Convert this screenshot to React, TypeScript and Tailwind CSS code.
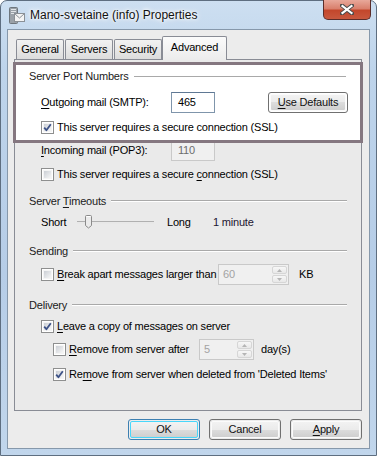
import React from "react";

const font = { fontFamily: '"Liberation Sans", Arial, sans-serif' };

function Check({ checked }: { checked?: boolean }) {
  return (
    <span className="relative inline-block w-[13px] h-[13px] shrink-0 border border-[#8e8f8f] bg-white">
      <span className="absolute inset-[1px] bg-[linear-gradient(135deg,#cbcfd5,#f6f6f6)] border border-[#f4f4f4]" />
      {checked && (
        <svg className="absolute inset-0" width="11" height="11" viewBox="0 0 11 11">
          <path d="M2.2 5.6 L4.4 8.2 L8.8 2.2" fill="none" stroke="#3d5287" strokeWidth="1.8" strokeLinejoin="round" />
        </svg>
      )}
    </span>
  );
}

function U({ children }: { children: React.ReactNode }) {
  return <span className="underline underline-offset-[2px]">{children}</span>;
}

function GroupHeader({ title, mt }: { title: React.ReactNode; mt: string }) {
  return (
    <div className={`flex items-center h-[16px] pl-[14px] pr-[14px] ${mt}`}>
      <span className="text-[#1b1b1b] whitespace-nowrap">{title}</span>
      <span className="flex-1 ml-[5px] h-px bg-[#a9a9a9] border-b border-white box-content" />
    </div>
  );
}

function Spinner() {
  return (
    <span className="flex flex-col w-[15px] h-[17px] ml-auto mr-[1px] gap-[1px]">
      <span className="flex-1 flex items-center justify-center border border-[#d6d6d6] rounded-[2px] bg-[linear-gradient(#f7f7f7,#e8e8e8)]">
        <svg width="5" height="3" viewBox="0 0 5 3"><path d="M0 3 L2.5 0 L5 3Z" fill="#b5b5b5" /></svg>
      </span>
      <span className="flex-1 flex items-center justify-center border border-[#d6d6d6] rounded-[2px] bg-[linear-gradient(#f7f7f7,#e8e8e8)]">
        <svg width="5" height="3" viewBox="0 0 5 3"><path d="M0 0 L2.5 3 L5 0Z" fill="#b5b5b5" /></svg>
      </span>
    </span>
  );
}

function Btn({ children, def, w }: { children: React.ReactNode; def?: boolean; w: string }) {
  return (
    <div
      className={`${w} h-[21px] rounded-[3px] border ${def ? "border-[#3c7fb1]" : "border-[#707070]"} p-px`}
    >
      <div
        className={`w-full h-full rounded-[2px] border ${def ? "border-[#48d7fb]" : "border-[#fbfbfb]"} flex items-center justify-center text-[#111] bg-[linear-gradient(#f2f2f2_0%,#ebebeb_50%,#dddddd_50%,#cfcfcf_100%)]`}
      >
        {children}
      </div>
    </div>
  );
}

export default function App() {
  return (
    <div
      style={font}
      className="w-[377px] h-[456px] text-[11px] tracking-[-0.2px] leading-none text-black overflow-hidden bg-white whitespace-nowrap"
    >
      <div className="relative w-[377px] h-[456px] rounded-t-[7px] border border-[#5e6e80] bg-[linear-gradient(to_bottom,#cddff1_0%,#bed4eb_15%,#b6cde7_60%,#c1d6ec_100%)] flex flex-col">
        {/* title bar */}
        <div className="h-[28px] flex items-center pl-[7px] shrink-0">
          <svg width="17" height="17" viewBox="0 0 17 17" className="mt-[1px]">
            <rect x="1.5" y="0.5" width="8" height="16" rx="1" fill="#9aa1a8" stroke="#6e767d" />
            <rect x="3" y="2" width="5" height="1" fill="#e1e4e7" />
            <rect x="3" y="4" width="5" height="1" fill="#e1e4e7" />
            <rect x="3" y="6" width="5" height="1" fill="#e1e4e7" />
            <rect x="6.5" y="6.5" width="10" height="8" fill="#f4f4f4" stroke="#8a9096" />
            <path d="M6.5 6.5 L11.5 11 L16.5 6.5" fill="none" stroke="#8a9096" />
          </svg>
          <span
            className="ml-[5px] text-[12px] tracking-normal text-[#111]"
            style={{ textShadow: "0 0 6px #fff, 0 0 4px #fff, 0 0 2px #fff" }}
          >
            Mano-svetaine (info) Properties
          </span>
          <div className="absolute top-[-1px] right-[5px] w-[48px] h-[20px] rounded-b-[5px] border border-[#5b2d2a] border-t-0 p-px bg-[linear-gradient(#e8a89a_0%,#d9806d_45%,#c3472c_55%,#c8583e_100%)] flex items-center justify-center">
            <svg width="14" height="11" viewBox="0 0 14 11">
              <path d="M2 1.5 L12 9.5 M12 1.5 L2 9.5" stroke="#4a4a4a" strokeWidth="4" strokeLinecap="square" />
              <path d="M2.5 2 L11.5 9 M11.5 2 L2.5 9" stroke="#ffffff" strokeWidth="2.2" strokeLinecap="square" />
            </svg>
          </div>
        </div>

        {/* client area */}
        <div className="ml-[6px] mr-[6px] h-[420px] border border-[#8698ab] bg-[#ececec] flex flex-col">
          <div className="pt-[7px] pl-[8px] h-[29px] flex items-end shrink-0">
            <div className="w-[48px] h-[20px] border border-b-0 border-[#898c95] rounded-t-[2px] bg-[linear-gradient(#f2f2f2,#dcdcdc)] flex items-center justify-center">
              General
            </div>
            <div className="ml-[1px] w-[48px] h-[20px] border border-b-0 border-[#898c95] rounded-t-[2px] bg-[linear-gradient(#f2f2f2,#dcdcdc)] flex items-center justify-center">
              Servers
            </div>
            <div className="ml-[1px] w-[48px] h-[20px] border border-b-0 border-[#898c95] rounded-t-[2px] bg-[linear-gradient(#f2f2f2,#dcdcdc)] flex items-center justify-center">
              Security
            </div>
            <div className="relative z-10 -mb-px w-[65px] h-[24px] border border-b-0 border-[#898c95] rounded-t-[2px] bg-[linear-gradient(#fbfbfb,#ececec)] flex items-center justify-center pb-[2px]">
              Advanced
            </div>
          </div>

          {/* tab panel */}
          <div className="ml-[6px] mr-[7px] h-[352px] border border-[#898c95] bg-[#eaeaea] flex flex-col shrink-0">
            {/* highlighted box */}
            <div className="relative z-10 mt-[2px] -mx-[2px] h-[81px] border-[3px] border-[#857780] bg-white flex flex-col shrink-0">
              <div className="flex items-center h-[16px] pl-[13px] pr-[14px] mt-[3px]">
                <span className="text-[#1b1b1b] whitespace-nowrap">Server Port Numbers</span>
                <span className="flex-1 ml-[5px] h-px bg-[#a9a9a9]" />
              </div>
              <div className="flex items-center h-[22px] mt-[7px] pl-[25px]">
                <span className="w-[130px]">
                  <U>O</U>utgoing mail (SMTP):
                </span>
                <span className="w-[44px] h-[21px] border border-[#7f95ab] border-t-[#5f7894] bg-white flex items-center pl-[6px]">
                  465
                </span>
                <span className="w-[53px]" />
                <Btn w="w-[80px]">
                  <span>
                    <U>U</U>se Defaults
                  </span>
                </Btn>
              </div>
              <div className="flex items-center h-[14px] mt-[7px] pl-[25px]">
                <Check checked />
                <span className="ml-[3px]">This server requires a secure connection (SSL)</span>
              </div>
            </div>

            <div className="flex items-center h-[21px] -mt-[3px] pl-[26px]">
              <span className="w-[130px]">
                <U>I</U>ncoming mail (POP3):
              </span>
              <span className="w-[44px] h-[21px] border border-[#c9c9c9] bg-[#f0f0f0] text-[#6d6d6d] flex items-center pl-[6px]">
                110
              </span>
            </div>
            <div className="flex items-center h-[14px] mt-[6px] pl-[26px]">
              <Check />
              <span className="ml-[3px]">
                This server requires a secure <U>c</U>onnection (SSL)
              </span>
            </div>

            <GroupHeader
              mt="mt-[12px]"
              title={
                <>
                  Server <U>T</U>imeouts
                </>
              }
            />
            <div className="flex items-center h-[18px] mt-[4px] pl-[26px]">
              <span className="w-[36px]">Short</span>
              <span className="relative w-[77px] h-[18px] flex items-center">
                <span className="w-full h-[2px] border-t border-[#b0b0b0] bg-[#e8e8e8] box-content" />
                <svg className="absolute left-[7px] top-[2px]" width="9" height="14" viewBox="0 0 9 14">
                  <path
                    d="M1.5 1.5 Q1.5 0.5 2.5 0.5 L6.5 0.5 Q7.5 0.5 7.5 1.5 L7.5 10.5 L4.5 13 L1.5 10.5 Z"
                    fill="#ebebeb"
                    stroke="#8a8a8a"
                  />
                  <path d="M2.5 1.5 L6.5 1.5" stroke="#ffffff" />
                </svg>
              </span>
              <span className="ml-[13px] w-[46px]">Long</span>
              <span className="text-[#1c1530]">1 minute</span>
            </div>

            <GroupHeader mt="mt-[12px]" title="Sending" />
            <div className="flex items-center h-[21px] mt-[5px] pl-[26px]">
              <Check />
              <span className="ml-[3px] w-[161px] whitespace-nowrap">
                <U>B</U>reak apart messages larger than
              </span>
              <span className="w-[71px] h-[21px] border border-[#c9c9c9] bg-[#f0f0f0] text-[#a3a3a3] flex items-center pl-[4px]">
                60
                <Spinner />
              </span>
              <span className="ml-[10px]">KB</span>
            </div>

            <GroupHeader mt="mt-[12px]" title="Delivery" />
            <div className="flex items-center h-[14px] mt-[6px] pl-[26px]">
              <Check checked />
              <span className="ml-[3px]">
                <U>L</U>eave a copy of messages on server
              </span>
            </div>
            <div className="flex items-center h-[21px] mt-[6px] pl-[38px]">
              <Check />
              <span className="ml-[3px] w-[130px]">
                <U>R</U>emove from server after
              </span>
              <span className="w-[55px] h-[21px] border border-[#c9c9c9] bg-[#f0f0f0] text-[#a3a3a3] flex items-center pl-[4px]">
                5
                <Spinner />
              </span>
              <span className="ml-[7px]">day(s)</span>
            </div>
            <div className="flex items-center h-[14px] mt-[7px] pl-[38px]">
              <Check checked />
              <span className="ml-[3px]">
                Re<U>m</U>ove from server when deleted from 'Deleted Items'
              </span>
            </div>
          </div>

          {/* buttons */}
          <div className="flex justify-end gap-[9px] mt-[8px] pr-[7px]">
            <Btn def w="w-[72px]">OK</Btn>
            <Btn w="w-[72px]">Cancel</Btn>
            <Btn w="w-[72px]">
              <span>
                <U>A</U>pply
              </span>
            </Btn>
          </div>
        </div>
      </div>
    </div>
  );
}
